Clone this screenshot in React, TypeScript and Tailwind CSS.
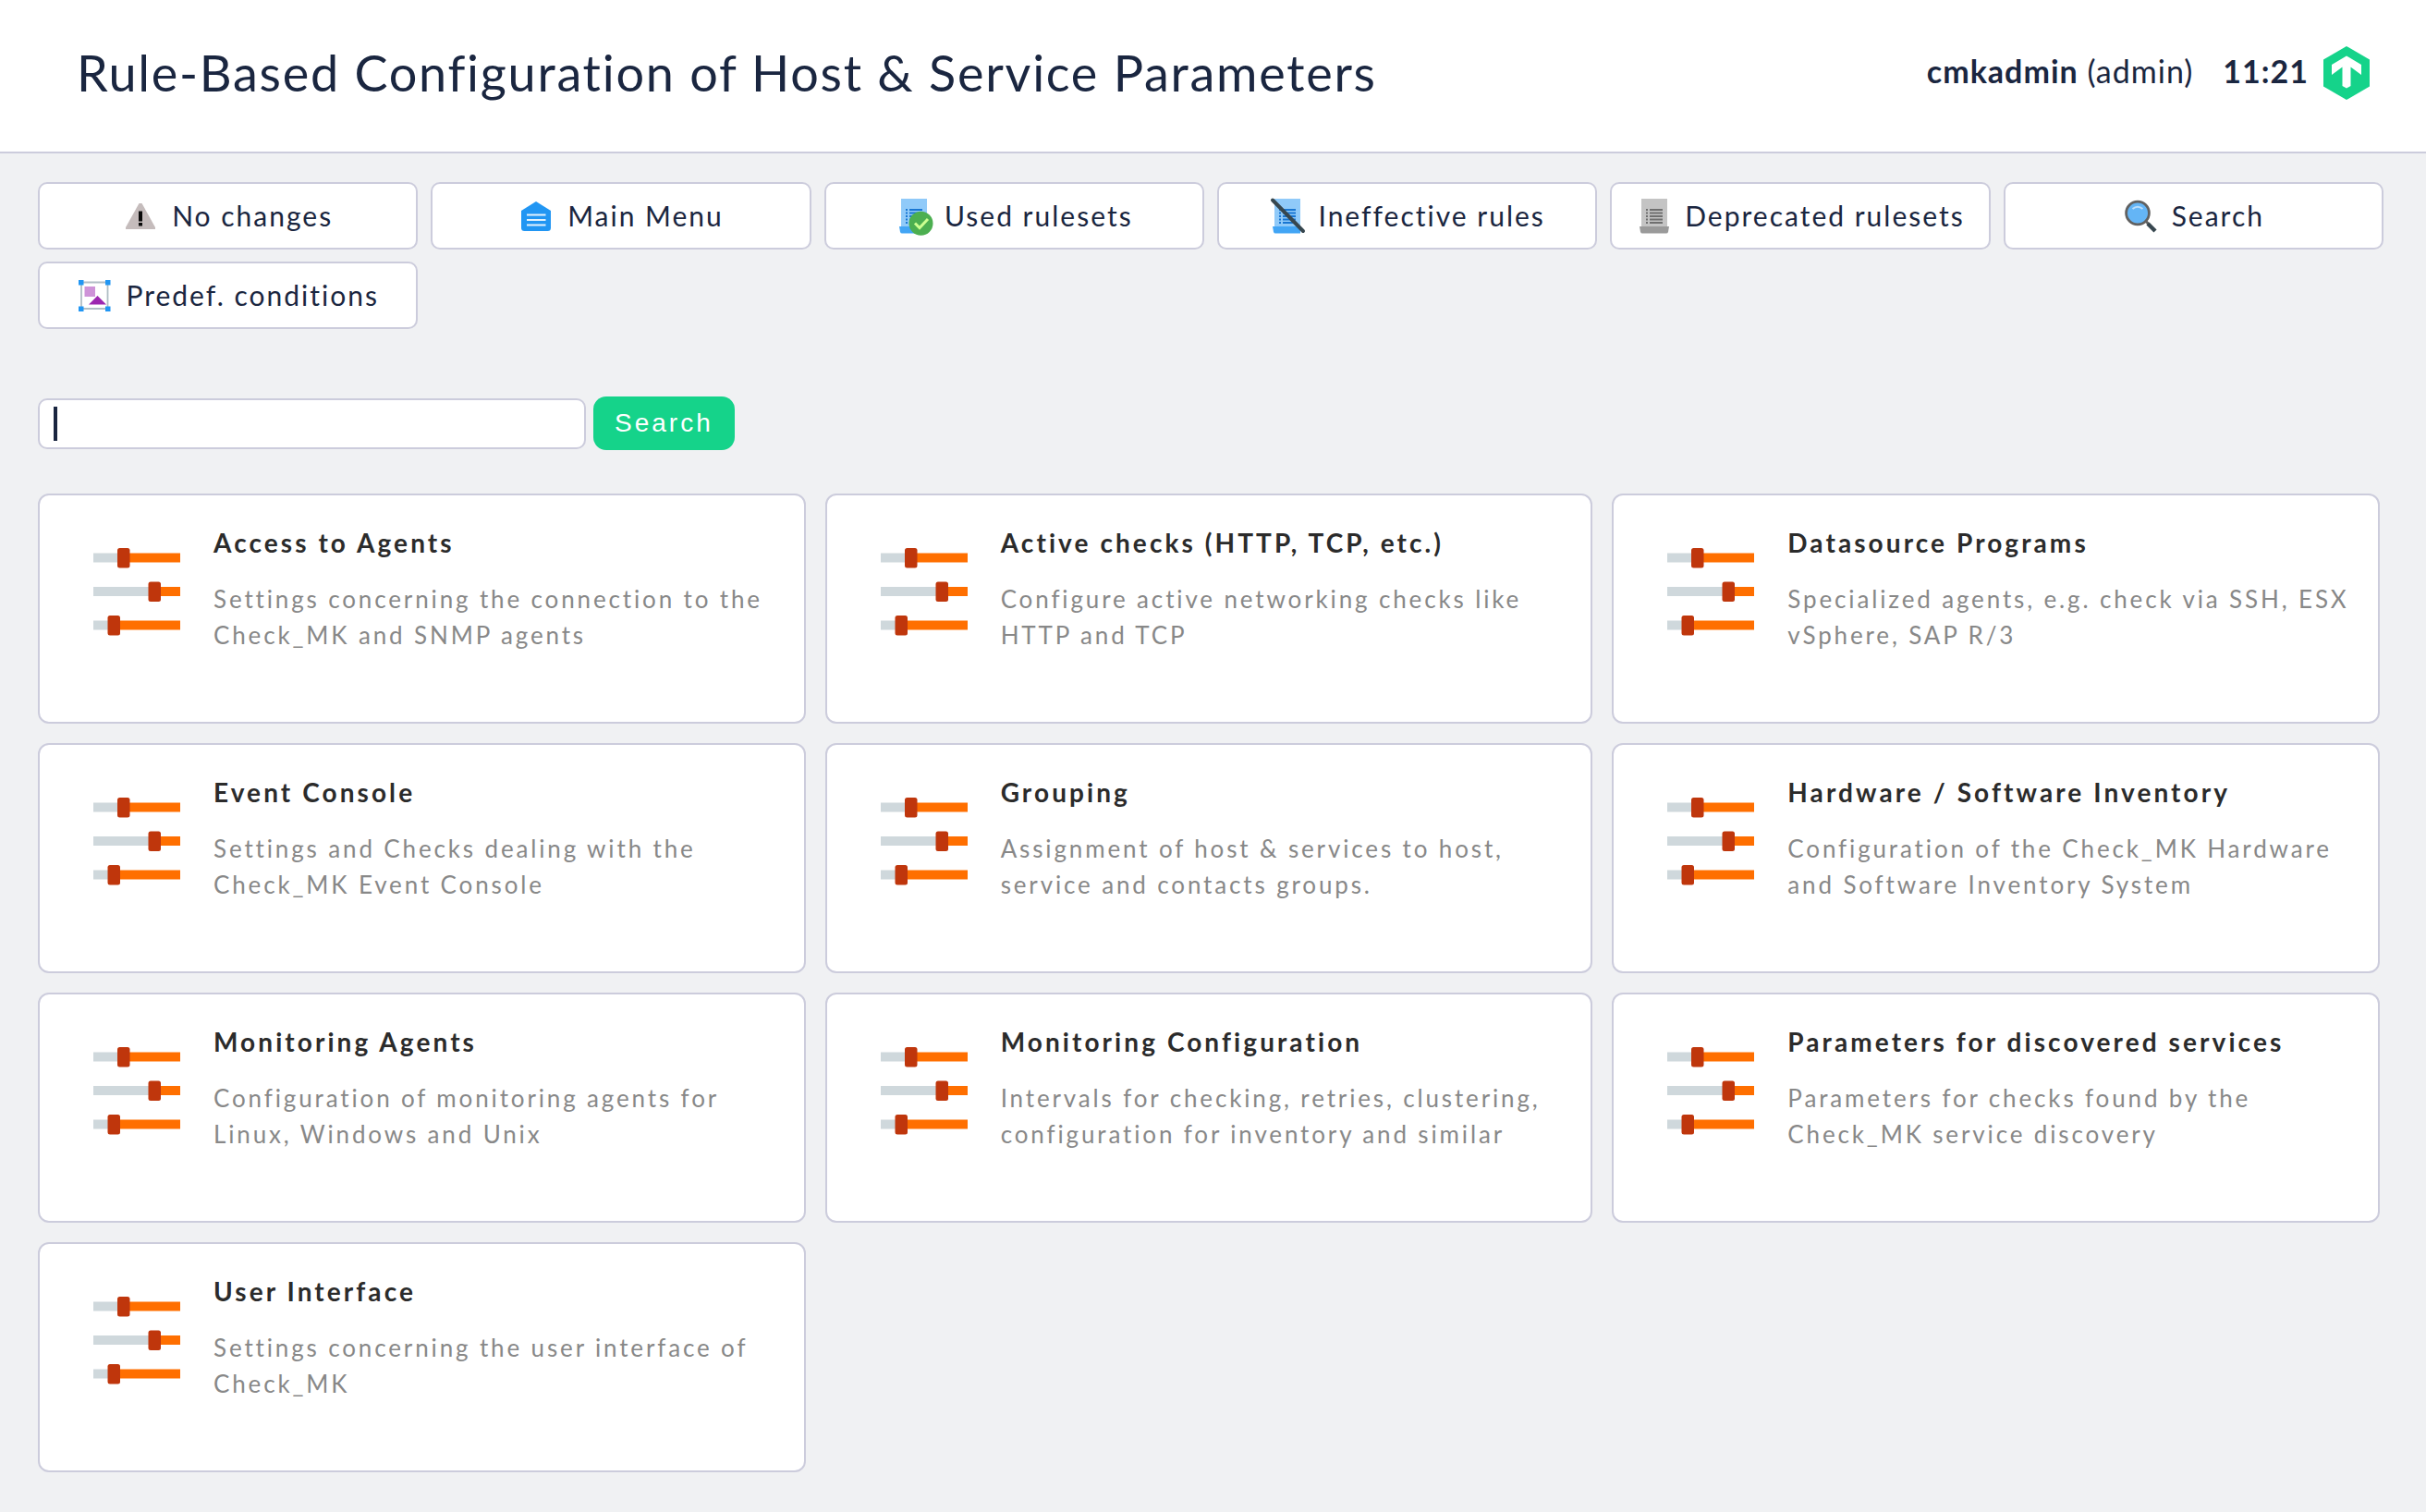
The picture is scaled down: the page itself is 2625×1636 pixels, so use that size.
import type { ReactNode } from 'react';

function WarningIcon() {
  return (
    <>
      <path d="M17.5 7h3L35 33v2H3v-2z" fill="#c5bcbc" />
      <path d="M17 15.5h4v11h-4zM17 28h4v3.5h-4z" fill="#0b0b0b" />
    </>
  );
}

function MenuIcon() {
  return (
    <>
      <path d="M19 5 35 15v18.500q0 3.500-3.500 3.500h-25q-3.500 0-3.500-3.500V15z" fill="#2196f3" />
      <path d="M9 19.500h20.500M9 25h20.500M9 30.500h20.500" stroke="#e3f2fd" strokeWidth="2" />
    </>
  );
}

function Scroll({ paper, foot, ink }: { paper: string; foot: string; ink: string }) {
  return (
    <>
      <path d="M6 2h28v31H6z" fill={paper} />
      <path d="M4 32h32l-1 6q-.5 1.500-2 1.500H7q-1.500 0-2-1.500z" fill={foot} />
      <path
        d="M11 14h2M15 14h14M11 17.500h2M15 17.500h14M11 21h2M15 21h14M11 24.500h2M15 24.500h14M11 28h2M15 28h14"
        stroke={ink}
        strokeWidth="2"
      />
    </>
  );
}

function UsedIcon() {
  return (
    <>
      <Scroll paper="#90caf9" foot="#42a5f5" ink="#1976d2" />
      <circle cx="27.500" cy="28.700" r="13" fill="#4caf50" />
      <path d="M21 28.500l5 5 9-9.500" fill="none" stroke="#ccff90" strokeWidth="3" />
    </>
  );
}

function IneffectiveIcon() {
  return (
    <>
      <path d="M6 2h28v31H6z" fill="#90caf9" />
      <path d="M4 32h30v7.500H7q-1.500 0-2-1.500z" fill="#42a5f5" />
      <path
        d="M11 14h2M15 14h14M11 17.500h2M15 17.500h14M11 21h2M15 21h14M11 24.500h2M15 24.500h14M11 28h2M15 28h14"
        stroke="#1976d2"
        strokeWidth="2"
      />
      <path d="M4 3.500 37 37" stroke="#37474f" strokeWidth="4" strokeLinecap="round" />
    </>
  );
}

function DeprecatedIcon() {
  return <Scroll paper="#c4c4c4" foot="#9a9a9a" ink="#6f6f6f" />;
}

function SearchIcon() {
  return (
    <>
      <path d="M24 25.500 28 29.500" stroke="#616161" strokeWidth="3" />
      <path d="M27 29 35 37" stroke="#37474f" strokeWidth="4.500" />
      <circle cx="16" cy="17.500" r="12.400" fill="#64b5f6" stroke="#616161" strokeWidth="2.800" />
      <path d="M10.500 13q5.500-4.500 11 0" fill="none" stroke="#bbdefb" strokeWidth="2" />
    </>
  );
}

function ConditionsIcon() {
  return (
    <>
      <path d="M5 6.500h28.500v28.500H5z" fill="none" stroke="#b0bec5" strokeWidth="1.800" />
      <path d="M8.500 11h11.500v11H8.500z" fill="#ce93d8" />
      <path d="M22.500 21 32 30.500H13z" fill="#9c27b0" />
      <path d="M2 4h5.500v5.500H2zM31 4h5.500v5.500H31zM2 32.500h5.500V38H2zM31 32.500h5.500V38H31z" fill="#2196f3" />
    </>
  );
}

const NAV: { label: string; icon: ReactNode }[] = [
  { label: 'No changes', icon: <WarningIcon /> },
  { label: 'Main Menu', icon: <MenuIcon /> },
  { label: 'Used rulesets', icon: <UsedIcon /> },
  { label: 'Ineffective rules', icon: <IneffectiveIcon /> },
  { label: 'Deprecated rulesets', icon: <DeprecatedIcon /> },
  { label: 'Search', icon: <SearchIcon /> },
  { label: 'Predef. conditions', icon: <ConditionsIcon /> },
];

const GROUPS = [
  ['Access to Agents', 'Settings concerning the connection to the Check_MK and SNMP agents'],
  ['Active checks (HTTP, TCP, etc.)', 'Configure active networking checks like HTTP and TCP'],
  ['Datasource Programs', 'Specialized agents, e.g. check via SSH, ESX vSphere, SAP R/3'],
  ['Event Console', 'Settings and Checks dealing with the Check_MK Event Console'],
  ['Grouping', 'Assignment of host & services to host, service and contacts groups.'],
  ['Hardware / Software Inventory', 'Configuration of the Check_MK Hardware and Software Inventory System'],
  ['Monitoring Agents', 'Configuration of monitoring agents for Linux, Windows and Unix'],
  ['Monitoring Configuration', 'Intervals for checking, retries, clustering, configuration for inventory and similar'],
  ['Parameters for discovered services', 'Parameters for checks found by the Check_MK service discovery'],
  ['User Interface', 'Settings concerning the user interface of Check_MK'],
];

function Logo() {
  return (
    <svg className="h-[58px] w-[50px] shrink-0" viewBox="0 0 50 58" aria-hidden="true">
      <path d="M25 0 50 14.500v29L25 58 0 43.500v-29z" fill="#15d38a" />
      <path d="M25 10.500 41 20v11L29.500 22.500V43L25 45.500 20.500 43V22.500L9 31V20z" fill="#fff" />
    </svg>
  );
}

function SlidersIcon() {
  return (
    <svg className="h-24 w-24 shrink-0" viewBox="0 0 96 96" aria-hidden="true">
      <path d="M1 6.500h28v10H1zM1 43h62v10H1zM1 79.500h20v10H1z" fill="#cfd8dc" />
      <path d="M35 6.500h60v10H35zM69 43h26v10H69zM24 79.500h71v10H24z" fill="#ff6f00" />
      <rect x="27" y="1" width="13.500" height="21.500" rx="2.500" fill="#bf360c" />
      <rect x="60.500" y="37.500" width="13.500" height="21.500" rx="2.500" fill="#bf360c" />
      <rect x="16.500" y="74" width="13.500" height="21.500" rx="2.500" fill="#bf360c" />
    </svg>
  );
}

export default function App() {
  return (
    <div className="min-h-screen bg-[#f0f1f3] font-['Lato',sans-serif] text-[#1a2640]">
      <header className="flex items-center justify-between border-b-2 border-[#ccccdc] bg-white pt-[46px] pr-[61px] pb-[52px] pl-[83px]">
        <h1 className="text-[54px] leading-[66px] tracking-[0.032em]">
          Rule-Based Configuration of Host &amp; Service Parameters
        </h1>
        <div className="flex items-center text-[34px] leading-[42px] tracking-[1px]">
          <p className="flex pb-1">
            <span>
              <b>cmkadmin</b> (admin)
            </span>
            <b className="mr-4 ml-8">11:21</b>
          </p>
          <Logo />
        </div>
      </header>

      <main className="pt-[31px] pr-[46px] pb-11 pl-[41px]">
        <nav className="grid grid-cols-6 gap-x-[14px] gap-y-[13px]">
          {NAV.map(({ label, icon }) => (
            <a
              key={label}
              href="#"
              className="flex h-[73px] items-center justify-center gap-[13px] rounded-[10px] border-2 border-[#ccccdc] bg-white pb-[2px] text-[30px] leading-[40px] tracking-[2px] whitespace-nowrap"
            >
              <svg className="size-10 shrink-0 overflow-visible" viewBox="0 0 40 40" aria-hidden="true">
                {icon}
              </svg>
              {label}
            </a>
          ))}
        </nav>

        <form className="mt-[73px] flex items-center gap-2" onSubmit={(e) => e.preventDefault()}>
          <div className="relative w-[593px]">
            <input
              type="text"
              aria-label="Search rulesets"
              className="block h-[55px] w-full rounded-[10px] border-2 border-[#ccccdc] bg-white px-4 text-[28px] caret-transparent outline-none"
            />
            <span className="absolute inset-y-[9px] left-[17px] w-1 bg-[#1a2640]" />
          </div>
          <button
            type="submit"
            className="h-[58px] rounded-[14px] bg-[#15d38a] px-[23px] font-['Liberation_Sans',sans-serif] text-[28px] leading-[32px] tracking-[3px] text-white"
          >
            Search
          </button>
        </form>

        <section className="mt-[47px] mr-1 grid grid-cols-3 gap-[21px]">
          {GROUPS.map(([title, text]) => (
            <a
              key={title}
              href="#"
              className="flex h-[249px] gap-[35px] rounded-[12px] border-2 border-[#ccccdc] bg-white pt-8 pr-6 pl-[57px]"
            >
              <span className="pt-6">
                <SlidersIcon />
              </span>
              <span className="min-w-0">
                <b className="block text-[28px] leading-[38px] tracking-[0.11em] text-[#2b2b2b]">{title}</b>
                <span className="mt-[23px] block text-[26px] leading-[39px] tracking-[0.11em] text-[#888]">
                  {text}
                </span>
              </span>
            </a>
          ))}
        </section>
      </main>
    </div>
  );
}
